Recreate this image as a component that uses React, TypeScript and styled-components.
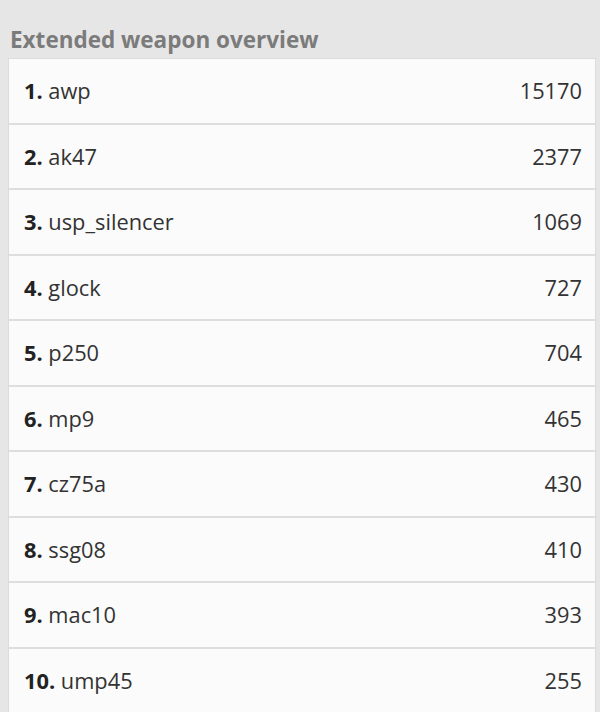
import React from "react";
import styled, { createGlobalStyle } from "styled-components";

const Global = createGlobalStyle`
  html, body { margin: 0; padding: 0; background: #e6e6e6; }
  body { font-family: "Open Sans", "Liberation Sans", sans-serif; }
`;

const Page = styled.div`
  padding: 27px 4px 0 8px;
  width: 600px;
  box-sizing: border-box;
`;

const Title = styled.h3`
  margin: 0 0 6px 2px;
  font-size: 22.5px;
  line-height: 25px;
  font-weight: 700;
  color: #7b7b7b;
`;

const List = styled.ul`
  list-style: none;
  margin: 0;
  padding: 0;
  border: 1px solid #dcdcdc;
  border-bottom: none;
  background: #fbfbfb;
`;

const Row = styled.li`
  display: flex;
  align-items: center;
  justify-content: space-between;
  height: 63.5px;
  padding: 0 13px 0 15px;
  border-bottom: 2px solid #dedede;
  font-size: 21.8px;
  color: #333;
`;

const Name = styled.span`
  b { font-weight: 700; color: #222; }
`;

const Count = styled.span``;

const data: [string, number][] = [
  ["awp", 15170],
  ["ak47", 2377],
  ["usp_silencer", 1069],
  ["glock", 727],
  ["p250", 704],
  ["mp9", 465],
  ["cz75a", 430],
  ["ssg08", 410],
  ["mac10", 393],
  ["ump45", 255],
];

export default function App() {
  return (
    <Page>
      <Global />
      <Title>Extended weapon overview</Title>
      <List>
        {data.map(([n, c], i) => (
          <Row key={n}>
            <Name>
              <b>{i + 1}.</b> {n}
            </Name>
            <Count>{c}</Count>
          </Row>
        ))}
      </List>
    </Page>
  );
}
